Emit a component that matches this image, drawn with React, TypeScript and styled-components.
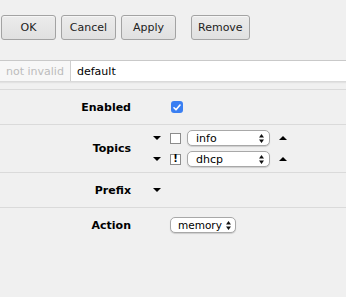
import React from "react";
import styled, { createGlobalStyle } from "styled-components";

const GlobalStyle = createGlobalStyle`
    html, body {
        margin: 0;
        padding: 0;
        background: #f0f0f0;
        font-family: "DejaVu Sans", Verdana, sans-serif;
        font-size: 11px;
        color: #000;
    }
`;

const Page = styled.div`
    width: 346px;
    height: 297px;
    overflow: hidden;
`;

const Toolbar = styled.div`
    display: flex;
    gap: 5px;
    padding: 15px 0 0 1px;
    height: 25px;
`;

const Button = styled.div<{ spaced?: boolean }>`
    box-sizing: border-box;
    min-width: 55px;
    height: 25px;
    padding: 0 6px;
    margin-left: ${props => props.spaced ? "10px" : "0"};
    display: flex;
    align-items: center;
    justify-content: center;
    border: 1px solid #a3a3a3;
    border-radius: 3px;
    background: linear-gradient(#ececec, #e0e0e0);
    box-shadow: inset 0 1px 0 #f6f6f6;
    color: #222;
`;

const Field = styled.div`
    margin-top: 20px;
    display: flex;
    height: 20px;
    border-top: 1px solid #c9c9c9;
    border-bottom: 1px solid #dadada;
    box-shadow: 0 1px 1px #e2e2e2;
`;

const FieldHint = styled.div`
    width: 71px;
    box-sizing: border-box;
    padding-left: 6px;
    display: flex;
    align-items: center;
    background: #f7f7f7;
    border-right: 1px solid #cfcfcf;
    color: #bcbcbc;
`;

const FieldInput = styled.div`
    flex: 1;
    display: flex;
    align-items: center;
    padding-left: 6px;
    background: #fff;
`;

const Form = styled.div`
    margin-top: 7px;
    border-top: 1px solid #dadada;
`;

const Row = styled.div<{ last?: boolean; pad?: number }>`
    display: grid;
    grid-template-columns: 131px 1fr;
    column-gap: 21px;
    align-items: center;
    min-height: 34px;
    padding: ${props => props.pad ?? 0}px 0;
    border-bottom: ${props => props.last ? "none" : "1px solid #dadada"};
`;

const Label = styled.div`
    text-align: right;
    font-weight: bold;
`;

const Values = styled.div`
    display: flex;
    flex-direction: column;
    gap: 5px;
`;

const Line = styled.div`
    display: flex;
    align-items: center;
    height: 16px;
`;

const ArrowSlot = styled.div`
    width: 18px;
    display: flex;
    align-items: center;
`;

const Triangle = styled.div<{ up?: boolean }>`
    width: 0;
    height: 0;
    margin-left: ${props => props.up ? "9px" : "1px"};
    border-left: 4px solid transparent;
    border-right: 4px solid transparent;
    ${props => props.up
        ? "border-bottom: 4px solid #000;"
        : "border-top: 4px solid #000;"}
`;

const BlueCheck = styled.div`
    width: 12px;
    height: 12px;
    border-radius: 3px;
    background: #3a7ff2;
    display: flex;
    align-items: center;
    justify-content: center;
    margin-left: 1px;
`;

const SmallBox = styled.div`
    box-sizing: border-box;
    width: 11px;
    height: 11px;
    border: 1px solid #8c8c8c;
    background: #fff;
    margin-right: 6px;
    display: flex;
    align-items: center;
    justify-content: center;
    font-weight: bold;
    font-size: 10px;
    line-height: 1;
`;

const Select = styled.div<{ w: number; compact?: boolean }>`
    box-sizing: border-box;
    width: ${props => props.w}px;
    height: 16px;
    padding: ${props => props.compact ? "0 4px 0 7px" : "0 5px 0 8px"};
    display: flex;
    align-items: center;
    justify-content: space-between;
    background: #fff;
    border: 1px solid #a8a8a8;
    border-radius: 5px;
    box-shadow: 0 1px 1px rgba(0, 0, 0, 0.15);
    font-size: ${props => props.compact ? "10.5px" : "11px"};
`;

const Updown = () => (
    <svg width="5" height="9" viewBox="0 0 5 9">
        <path d="M2.5 0 L5 3.5 L0 3.5 Z M2.5 9 L5 5.5 L0 5.5 Z" fill="#111" />
    </svg>
);

const Check = () => (
    <svg width="8" height="7" viewBox="0 0 8 7">
        <path d="M1 3.8 L3 5.8 L7 1" stroke="#fff" strokeWidth="1.6" fill="none" strokeLinecap="round" strokeLinejoin="round" />
    </svg>
);

const topics = [
    { value: "info", mark: "" },
    { value: "dhcp", mark: "!" },
];

export default function App() {
    return <>
        <GlobalStyle />
        <Page>
            <Toolbar>
                <Button>OK</Button>
                <Button>Cancel</Button>
                <Button>Apply</Button>
                <Button spaced>Remove</Button>
            </Toolbar>
            <Field>
                <FieldHint>not invalid</FieldHint>
                <FieldInput>default</FieldInput>
            </Field>
            <Form>
                <Row>
                    <Label>Enabled</Label>
                    <Line>
                        <ArrowSlot />
                        <BlueCheck><Check /></BlueCheck>
                    </Line>
                </Row>
                <Row pad={5}>
                    <Label>Topics</Label>
                    <Values>
                        {topics.map(t =>
                            <Line key={t.value}>
                                <ArrowSlot><Triangle /></ArrowSlot>
                                <SmallBox>{t.mark}</SmallBox>
                                <Select w={83}>{t.value}<Updown /></Select>
                                <Triangle up />
                            </Line>)}
                    </Values>
                </Row>
                <Row>
                    <Label>Prefix</Label>
                    <Line>
                        <ArrowSlot><Triangle /></ArrowSlot>
                    </Line>
                </Row>
                <Row last>
                    <Label>Action</Label>
                    <Line>
                        <ArrowSlot />
                        <Select w={66} compact>memory<Updown /></Select>
                    </Line>
                </Row>
            </Form>
        </Page>
    </>;
}
